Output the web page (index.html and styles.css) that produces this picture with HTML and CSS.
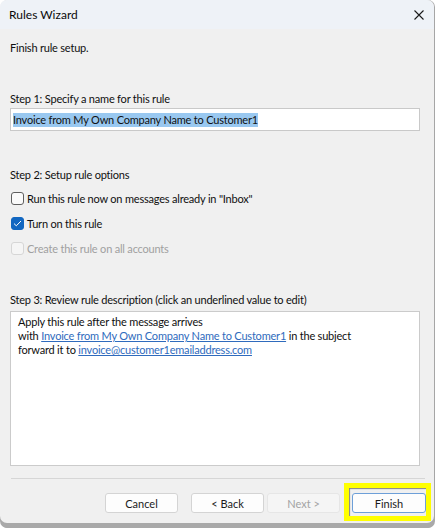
FILE: index.html
```html
<!DOCTYPE html>
<html>
<head>
<meta charset="utf-8">
<link rel="stylesheet" href="styles.css">
</head>
<body>
<div class="window">
  <div class="titlebar">
    <span class="title">Rules Wizard</span>
    <svg class="close" width="10" height="10" viewBox="0 0 10 10"><path d="M0.5 0.5 L9.5 9.5 M9.5 0.5 L0.5 9.5" stroke="#1a1a1a" stroke-width="1.1" fill="none"/></svg>
  </div>
  <div class="content">
    <div class="intro">Finish rule setup.</div>
    <div class="label step1">Step 1: Specify a name for this rule</div>
    <div class="input"><span class="sel">Invoice from My Own Company Name to Customer1</span></div>
    <div class="label step2">Step 2: Setup rule options</div>
    <div class="options">
      <div class="opt"><span class="cb"></span><span>Run this rule now on messages already in "Inbox"</span></div>
      <div class="opt"><span class="cb checked"><svg width="9" height="7" viewBox="0 0 9 7"><path d="M1 3.6 L3.3 5.8 L8 1" stroke="#fff" stroke-width="1" fill="none"/></svg></span><span>Turn on this rule</span></div>
      <div class="opt disabled"><span class="cb"></span><span>Create this rule on all accounts</span></div>
    </div>
    <div class="label step3">Step 3: Review rule description (click an underlined value to edit)</div>
    <div class="desc">
      <div>Apply this rule after the message arrives</div>
      <div>with <a class="link">Invoice from My Own Company Name to Customer1</a> in the subject</div>
      <div>forward it to <a class="link">invoice@customer1emailaddress.com</a></div>
    </div>
    <div class="sep"></div>
    <div class="buttons">
      <button class="btn">Cancel</button>
      <button class="btn back">&lt; Back</button>
      <button class="btn next" disabled>Next &gt;</button>
      <span class="hl"><button class="btn finish">Finish</button></span>
    </div>
  </div>
</div>
</body>
</html>
```
FILE: styles.css
```css
html, body {
  margin: 0;
  padding: 0;
  background: #ffffff;
}
body {
  width: 436px;
  height: 528px;
  overflow: hidden;
  font-family: "Lato", "Noto Sans", sans-serif;
  font-size: 11px;
  color: #0f0f0f;
}
.window {
  width: 434px;
  height: 523px;
  background: #f0f0f0;
  border-radius: 7px;
  box-shadow: 1px 0 0 #a6a6a6, 0 5px 0 #a9a9a9, 1px 5px 0 #a9a9a9;
  display: flex;
  flex-direction: column;
  overflow: hidden;
}
.titlebar {
  height: 29px;
  background: #eef2f7;
  display: flex;
  align-items: center;
  justify-content: space-between;
  padding: 0 10px 0 9px;
  font-size: 12px;
  color: #0a0a0a;
}
.content {
  padding: 0 14px 0 10px;
  display: flex;
  flex-direction: column;
  letter-spacing: -0.2px;
}
.intro { margin-top: 11px; line-height: 16px; }
.label { line-height: 16px; }
.step1 { margin-top: 35px; }
.input {
  margin-top: 1px;
  height: 21px;
  background: #fff;
  border: 1px solid #c9c9c9;
  display: flex;
  align-items: center;
  padding-left: 2px;
}
.sel { background: #99c8f0; line-height: 14px; color: #111; }
.step2 { margin-top: 36px; }
.options { display: flex; flex-direction: column; gap: 9px; margin-top: 7px; padding-left: 1px; }
.opt { display: flex; align-items: center; gap: 3px; height: 16px; }
.cb {
  width: 11px;
  height: 11px;
  border: 1px solid #5f5f5f;
  border-radius: 3px;
  background: #fafafa;
  display: flex;
  align-items: center;
  justify-content: center;
}
.cb.checked { background: #1267c1; border-color: #1267c1; }
.disabled { color: #a0a0a0; }
.disabled .cb { border-color: #d6d6d6; background: #f5f5f5; }
.step3 { margin-top: 36px; }
.desc {
  margin-top: 3px;
  height: 155px;
  background: #fff;
  border: 1px solid #cbcbcb;
  padding: 3px 0 0 7px;
  box-sizing: border-box;
  line-height: 14px;
}
.link { color: #2f6bbd; text-decoration: underline; }
.sep { margin-top: 12px; height: 1px; background: #d6d6d6; margin-right: -5px; margin-left: 1px; }
.buttons {
  display: flex;
  justify-content: flex-end;
  align-items: flex-start;
  margin-top: 4px;
  margin-right: -11px;
}
.btn {
  width: 73px;
  height: 20px;
  box-sizing: border-box;
  border: 1px solid #d4d4d4;
  border-radius: 3px;
  background: #fdfdfd;
  font-family: inherit;
  font-size: 11px;
  color: #1b1b1b;
  padding: 0;
  margin-top: 10px;
}
.back { margin-left: 13px; }
.next { margin-left: 3px; background: #f5f5f5; color: #a3a3a3; border-color: #e6e6e6; }
.hl {
  margin-left: 4px;
  border: 5px solid #ffff00;
  padding: 5px 0 3px 3px;
  display: flex;
  box-shadow: inset 1px 1px 1px rgba(0, 0, 0, 0.45);
}
.finish { border-color: #6d9fd8; margin-top: 0; width: 74px; }
```
